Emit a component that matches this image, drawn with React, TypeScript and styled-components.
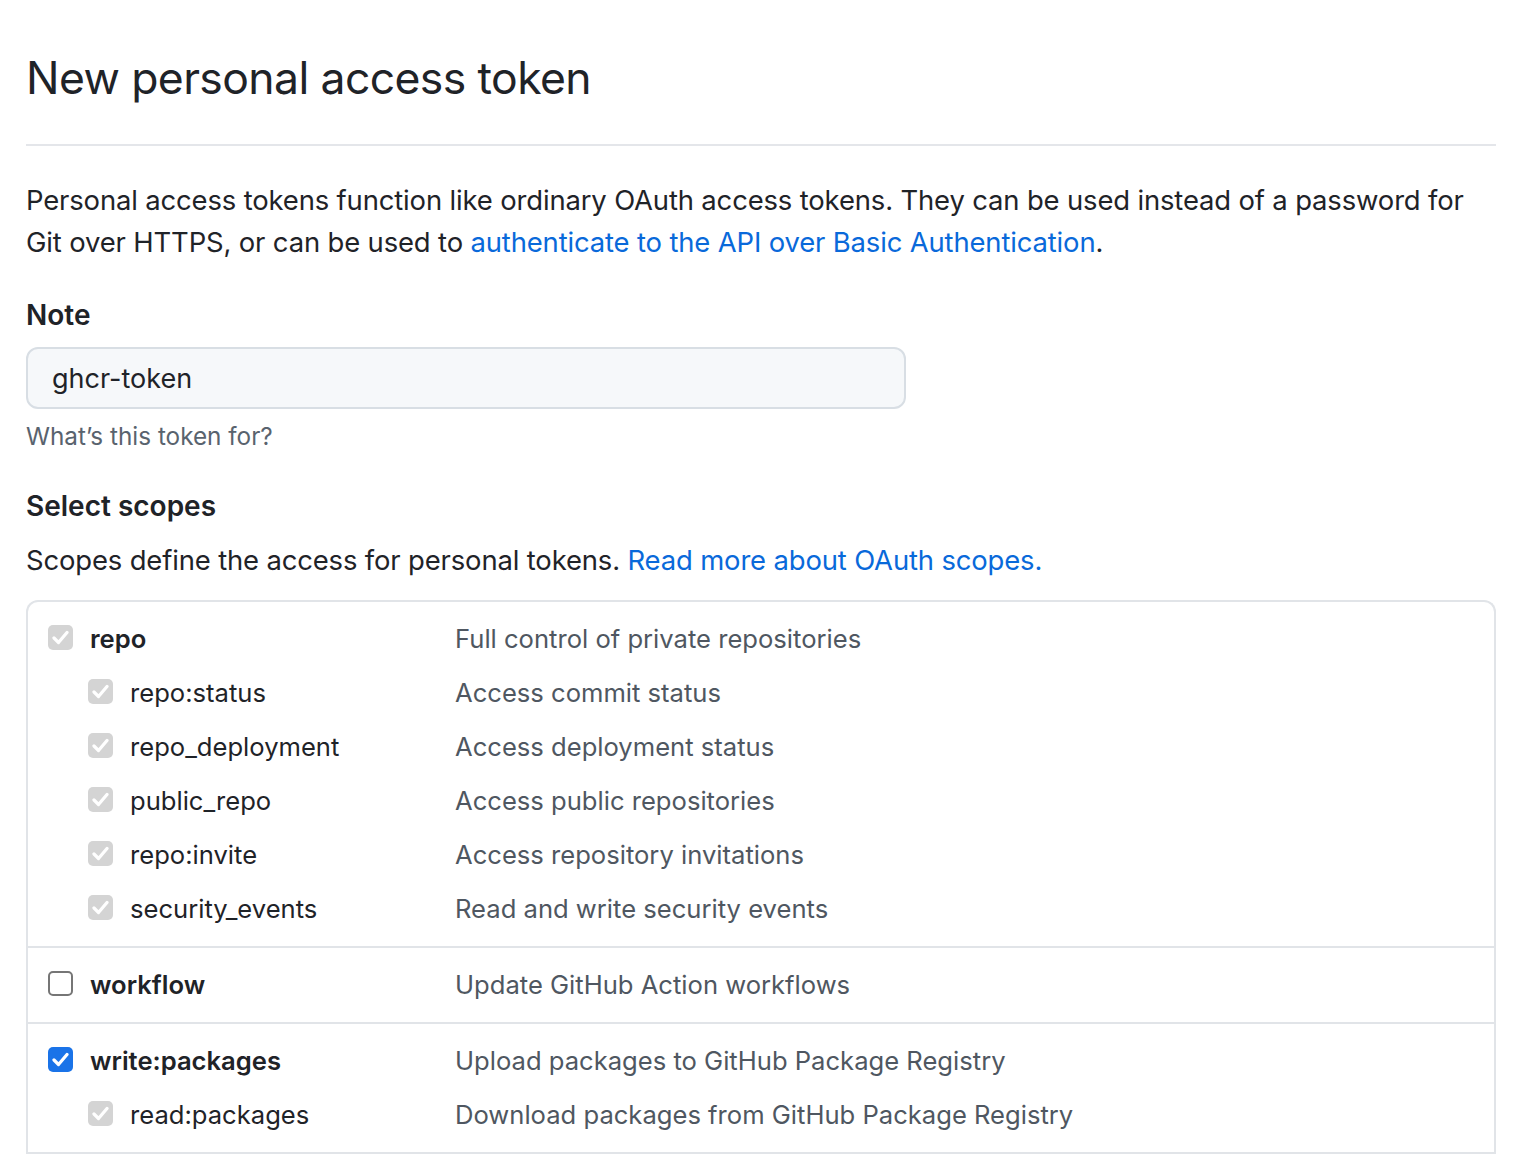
import styled, { createGlobalStyle } from "styled-components";

const GlobalStyle = createGlobalStyle`
  html, body {
    margin: 0;
    padding: 0;
    background: #ffffff;
  }
  body {
    font-family: Inter, "Liberation Sans", Arial, sans-serif;
    color: #1f2328;
    -webkit-font-smoothing: antialiased;
  }
`;

const Page = styled.div`
  width: 1470px;
  padding: 0 26px;
`;

const Title = styled.h1`
  margin: 0;
  padding-top: 48px;
  padding-bottom: 36px;
  font-size: 44.5px;
  font-weight: 400;
  line-height: 60px;
  letter-spacing: -0.6px;
  border-bottom: 2px solid #e4e6ea;
`;

const Lead = styled.p<{ $top: number }>`
  margin: ${(p) => p.$top}px 0 0;
  font-size: 27.45px;
  line-height: 42px;
  letter-spacing: -0.15px;
`;

const Link = styled.a`
  color: #0969da;
  text-decoration: none;
`;

const Label = styled.div<{ $top: number }>`
  margin-top: ${(p) => p.$top}px;
  font-size: 28px;
  font-weight: 600;
  line-height: 42px;
`;

const Input = styled.div`
  box-sizing: border-box;
  margin-top: 11px;
  width: 880px;
  height: 62px;
  padding: 0 24px;
  display: flex;
  align-items: center;
  background: #f6f8fa;
  border: 2px solid #d8dee4;
  border-radius: 12px;
  font-size: 27px;
`;

const Hint = styled.div`
  margin-top: 9px;
  font-size: 24.3px;
  line-height: 36px;
  color: #59636e;
`;

const ScopeBox = styled.div`
  margin-top: 19px;
  width: 1466px;
  border: 2px solid #e1e4e8;
  border-bottom: none;
  border-radius: 12px 12px 0 0;
`;

const Group = styled.div`
  padding: 10px 0;
  border-bottom: 2px solid #e1e4e8;
`;

const Row = styled.div<{ $child?: boolean }>`
  height: 54px;
  display: grid;
  grid-template-columns: 25px ${(p) => (p.$child ? "308px" : "348px")} 1fr;
  column-gap: 17px;
  align-items: center;
  padding-left: ${(p) => (p.$child ? "60px" : "20px")};
  font-size: 25.6px;
  line-height: 42px;
`;

const Name = styled.span<{ $bold?: boolean }>`
  font-weight: ${(p) => (p.$bold ? 600 : 400)};
  white-space: nowrap;
`;

const Desc = styled.span`
  color: #4f5761;
  white-space: nowrap;
`;

const Box = styled.span<{ $state: "disabled" | "on" | "off" }>`
  width: 25px;
  height: 25px;
  box-sizing: border-box;
  border-radius: 5px;
  margin-top: -4px;
  display: flex;
  align-items: center;
  justify-content: center;
  background: ${(p) =>
    p.$state === "disabled" ? "#d4d4d4" : p.$state === "on" ? "#1a73e8" : "#ffffff"};
  border: ${(p) => (p.$state === "off" ? "2px solid #767676" : "none")};
`;

const Check = ({ color }: { color: string }) => (
  <svg width="17" height="15" viewBox="0 0 17 15" fill="none">
    <path
      d="M2 8 L6.5 12.5 L15 2.5"
      stroke={color}
      strokeWidth="3.2"
      strokeLinecap="round"
      strokeLinejoin="round"
    />
  </svg>
);

type Scope = {
  name: string;
  desc: string;
  state: "disabled" | "on" | "off";
  child?: boolean;
};

const groups: Scope[][] = [
  [
    { name: "repo", desc: "Full control of private repositories", state: "disabled" },
    { name: "repo:status", desc: "Access commit status", state: "disabled", child: true },
    { name: "repo_deployment", desc: "Access deployment status", state: "disabled", child: true },
    { name: "public_repo", desc: "Access public repositories", state: "disabled", child: true },
    { name: "repo:invite", desc: "Access repository invitations", state: "disabled", child: true },
    { name: "security_events", desc: "Read and write security events", state: "disabled", child: true },
  ],
  [{ name: "workflow", desc: "Update GitHub Action workflows", state: "off" }],
  [
    { name: "write:packages", desc: "Upload packages to GitHub Package Registry", state: "on" },
    { name: "read:packages", desc: "Download packages from GitHub Package Registry", state: "disabled", child: true },
  ],
];

function App() {
  return (
    <Page>
      <GlobalStyle />
      <Title>New personal access token</Title>
      <Lead $top={33}>
        Personal access tokens function like ordinary OAuth access tokens. They can be used instead
        of a password for Git over HTTPS, or can be used to{" "}
        <Link href="#">authenticate to the API over Basic Authentication</Link>.
      </Lead>
      <Label $top={31}>Note</Label>
      <Input>ghcr-token</Input>
      <Hint>What’s this token for?</Hint>
      <Label $top={31}>Select scopes</Label>
      <Lead $top={12}>
        Scopes define the access for personal tokens.{" "}
        <Link href="#">Read more about OAuth scopes.</Link>
      </Lead>
      <ScopeBox>
        {groups.map((g, i) => (
          <Group key={i}>
            {g.map((s) => (
              <Row key={s.name} $child={s.child}>
                <Box $state={s.state}>
                  {s.state !== "off" && <Check color="#ffffff" />}
                </Box>
                <Name $bold={!s.child}>{s.name}</Name>
                <Desc>{s.desc}</Desc>
              </Row>
            ))}
          </Group>
        ))}
      </ScopeBox>
    </Page>
  );
}

export default App;
